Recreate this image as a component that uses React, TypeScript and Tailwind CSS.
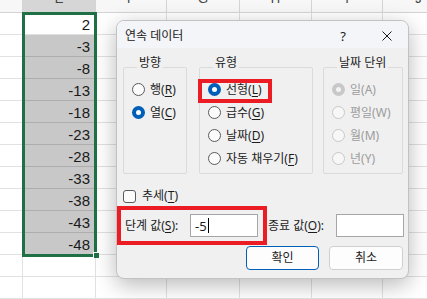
import React from "react";

const COLS = [
  { l: "D", w: 23 },
  { l: "E", w: 73 },
  { l: "F", w: 71 },
  { l: "G", w: 73 },
  { l: "H", w: 72 },
  { l: "I", w: 71 },
  { l: "J", w: 72 },
];

const VALUES = [2, -3, -8, -13, -18, -23, -28, -33, -38, -43, -48];

function Radio({ checked, disabled }: { checked?: boolean; disabled?: boolean }) {
  if (disabled && checked)
    return (
      <span className="w-[13px] h-[13px] shrink-0 rounded-full bg-[#c8c8c8] flex items-center justify-center">
        <span className="w-[5px] h-[5px] rounded-full bg-[#f3f3f3]" />
      </span>
    );
  if (disabled)
    return <span className="w-[13px] h-[13px] shrink-0 rounded-full border border-[#c8c8c8] bg-[#f7f7f7]" />;
  if (checked)
    return (
      <span className="w-[13px] h-[13px] shrink-0 rounded-full bg-[#005fb8] flex items-center justify-center">
        <span className="w-[5px] h-[5px] rounded-full bg-white" />
      </span>
    );
  return <span className="w-[13px] h-[13px] shrink-0 rounded-full border border-[#5a5a5a] bg-[#fbfbfb]" />;
}

function RadioRow({
  label,
  mn,
  checked,
  disabled,
}: {
  label: string;
  mn: string;
  checked?: boolean;
  disabled?: boolean;
}) {
  return (
    <div className="h-[23px] flex items-center gap-[5px]">
      <Radio checked={checked} disabled={disabled} />
      <span className={`text-[12px] leading-[16px] whitespace-nowrap ${disabled ? "text-[#9c9c9c]" : "text-[#1b1b1b]"}`}>
        {label}(
        {disabled ? mn : <span className="underline underline-offset-[2px]">{mn}</span>})
      </span>
    </div>
  );
}

function Group({ title, width, className, children }: { title: string; width: string; className?: string; children: React.ReactNode }) {
  return (
    <fieldset className={`${width} ${className ?? ""} border border-[#dadada] rounded-[2px] pl-[8px] pb-[3px]`}>
      <legend className="ml-[5px] px-[2px] text-[12px] leading-[14px] pb-[8px] text-[#1b1b1b] whitespace-nowrap">
        {title}
      </legend>
      {children}
    </fieldset>
  );
}

export default function App() {
  return (
    <div className="relative w-[427px] h-[299px] overflow-hidden bg-white font-['Noto_Sans','Noto_Sans_CJK_KR',sans-serif]">
      {/* header row */}
      <div className="flex h-[13px] overflow-hidden">
        {COLS.map((c) => (
          <div
            key={c.l}
            style={{ width: c.w }}
            className={`shrink-0 h-[13px] overflow-hidden border-r border-b border-[#d4d4d4] flex justify-center ${
              c.l === "E" ? "bg-[#d6d6d6]" : "bg-[#f7f7f7]"
            }`}
          >
            {c.l !== "D" && (
              <span className="mt-[-9px] text-[13px] leading-[16px] text-[#444] font-['Liberation_Sans',sans-serif]">{c.l}</span>
            )}
          </div>
        ))}
      </div>
      {/* rows */}
      {Array.from({ length: 13 }).map((_, r) => (
        <div key={r} className="flex h-[22px]">
          {COLS.map((c) => {
            const isE = c.l === "E";
            const sel = isE && r > 0 && r < VALUES.length;
            return (
              <div
                key={c.l}
                style={{ width: c.w }}
                className={`shrink-0 h-[22px] border-r border-b flex items-end justify-end pr-[5px] ${
                  sel ? "bg-[#c8c8c8] border-b-[#adadad] border-r-[#c8c8c8]" : "bg-white border-[#e1e1e1]"
                }`}
              >
                {isE && r < VALUES.length && (
                  <span className="text-[15px] leading-[18px] text-[#1a1a1a] font-['Liberation_Sans',sans-serif]">
                    {VALUES[r]}
                  </span>
                )}
              </div>
            );
          })}
        </div>
      ))}

      {/* selection outline */}
      <div className="absolute left-[22px] top-[12px] w-[75px] h-[245px] border-[3px] border-[#1f7145]" />
      <div className="absolute left-[93px] top-[252px] w-[6px] h-[6px] bg-[#1f7145] border-l border-t border-white" />

      {/* dialog */}
      <div className="absolute left-[116px] top-[20px] w-[293px] h-[259px] rounded-[8px] border border-[#c2c2c2] bg-[#f0f0f0] shadow-[0_6px_22px_rgba(0,0,0,0.28)] overflow-hidden flex flex-col">
        <div className="h-[27px] shrink-0 bg-[#f4f5f9] flex items-center pl-[8px] pr-[16px]">
          <span className="text-[12px] leading-[16px] text-[#1b1b1b] mt-[2px]">연속 데이터</span>
          <span className="ml-auto text-[13px] leading-[16px] text-[#1b1b1b] mt-[2px]">?</span>
          <svg className="ml-[36px] mt-[2px]" width="10" height="10" viewBox="0 0 10 10">
            <path d="M0.5 0.5 L9.5 9.5 M9.5 0.5 L0.5 9.5" stroke="#1b1b1b" strokeWidth="1" />
          </svg>
        </div>

        <div className="flex flex-col">
          {/* groups */}
          <div className="flex items-stretch mt-[8px] pl-[6px]">
            <Group title="방향" width="w-[64px]">
              <RadioRow label="행" mn="R" />
              <RadioRow label="열" mn="C" checked />
            </Group>
            <Group title="유형" width="w-[114px]" className="ml-[12px]">
              <RadioRow label="선형" mn="L" checked />
              <RadioRow label="급수" mn="G" />
              <RadioRow label="날짜" mn="D" />
              <RadioRow label="자동 채우기" mn="F" />
            </Group>
            <Group title="날짜 단위" width="w-[80px]" className="ml-[10px]">
              <div>
                <RadioRow label="일" mn="A" checked disabled />
                <RadioRow label="평일" mn="W" disabled />
                <RadioRow label="월" mn="M" disabled />
                <RadioRow label="년" mn="Y" disabled />
              </div>
            </Group>
          </div>

          {/* trend checkbox */}
          <div className="mt-[14px] h-[16px] pl-[6px] flex items-center gap-[6px]">
            <span className="w-[13px] h-[13px] rounded-[3px] border border-[#5a5a5a] bg-[#fbfbfb]" />
            <span className="text-[12px] leading-[16px] text-[#1b1b1b]">
              추세(<span className="underline underline-offset-[2px]">T</span>)
            </span>
          </div>

          {/* step / stop */}
          <div className="mt-[10px] h-[23px] flex items-center pl-[8px]">
            <span className="w-[65px] text-[12px] leading-[16px] text-[#1b1b1b] whitespace-nowrap">
              단계 값(<span className="underline underline-offset-[2px]">S</span>):
            </span>
            <div className="w-[68px] h-[23px] border border-[#a6a6a6] bg-white flex items-center pl-[4px]">
              <span className="text-[13px] leading-[16px] text-[#1b1b1b]">-5</span>
              <span className="ml-[1px] w-[1px] h-[15px] bg-black" />
            </div>
            <span className="ml-[10px] w-[68px] text-[12px] leading-[16px] text-[#1b1b1b] whitespace-nowrap">
              종료 값(<span className="underline underline-offset-[2px]">O</span>):
            </span>
            <div className="w-[68px] h-[23px] border border-[#a6a6a6] bg-white" />
          </div>

          {/* buttons */}
          <div className="mt-[9px] flex pl-[129px]">
            <button className="w-[73px] h-[24px] rounded-[4px] border border-[#005fb8] bg-[#fdfdfd] text-[12px] leading-[16px] text-[#1b1b1b]">
              확인
            </button>
            <button className="ml-[10px] w-[74px] h-[24px] rounded-[4px] border border-[#d0d0d0] bg-[#fdfdfd] text-[12px] leading-[16px] text-[#1b1b1b]">
              취소
            </button>
          </div>
        </div>

        {/* red annotation boxes */}
        <div className="absolute left-[81px] top-[58px] w-[74px] h-[24px] border-[4px] border-[#ec1c24]" />
        <div className="absolute left-0 top-[185px] w-[150px] h-[39px] border-[4px] border-[#ec1c24]" />
      </div>
    </div>
  );
}
